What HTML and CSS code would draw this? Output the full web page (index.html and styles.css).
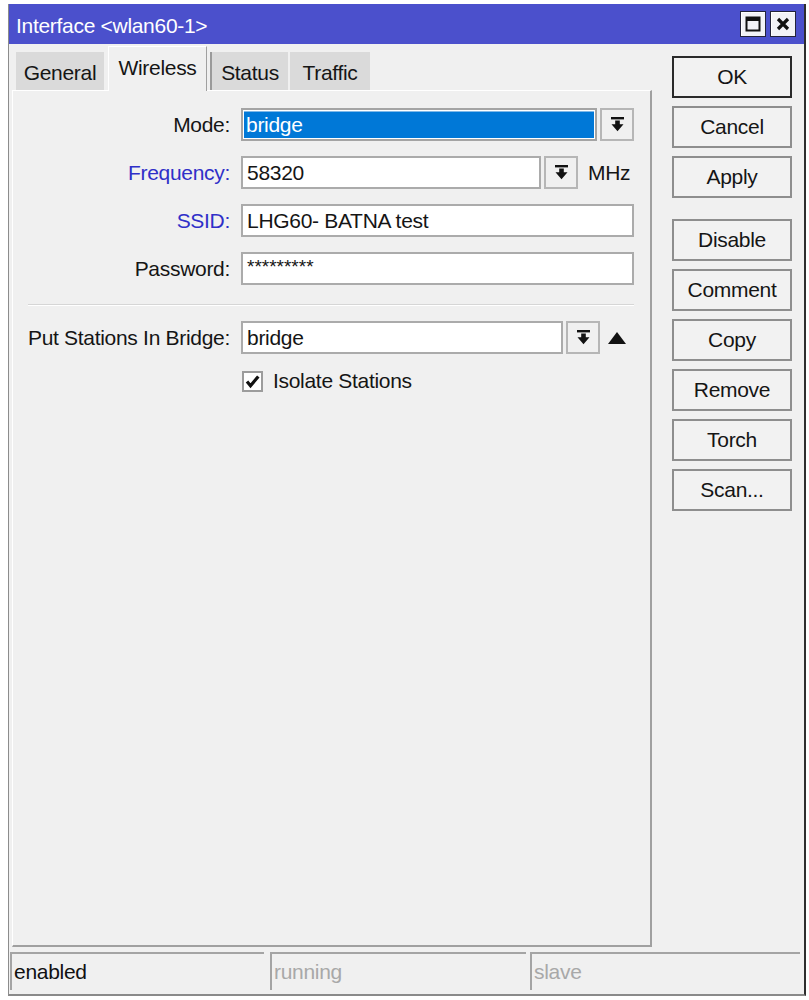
FILE: index.html
```html
<!DOCTYPE html>
<html lang="en">
<head>
    <meta charset="UTF-8">
    <title>Interface &lt;wlan60-1&gt;</title>
    <link rel="stylesheet" href="styles.css">
</head>
<body>
    <div class="window">
        <!-- 标题栏 -->
        <div class="titlebar">
            <span class="title">Interface &lt;wlan60-1&gt;</span>
            <div class="title-buttons">
                <span class="tbtn">
                    <svg width="16" height="16" viewBox="0 0 16 16"><rect x="1.5" y="1.5" width="13" height="13" fill="none" stroke="#111" stroke-width="2"/><rect x="1" y="1" width="14" height="4" fill="#111"/></svg>
                </span>
                <span class="tbtn">
                    <svg width="16" height="16" viewBox="0 0 16 16"><path d="M3 3L13 13M13 3L3 13" stroke="#111" stroke-width="3.2"/></svg>
                </span>
            </div>
        </div>

        <div class="window-body">
            <div class="main">
                <div class="left">
                    <div class="tabs">
                        <div class="tab tab-general">General</div>
                        <div class="tab active">Wireless</div>
                        <div class="tab tab-status">Status</div>
                        <div class="tab tab-traffic">Traffic</div>
                    </div>
                    <div class="panel">
                        <div class="form">
                            <div class="label">Mode:</div>
                            <div class="ctl">
                                <div class="field selected"><span class="sel">bridge</span></div>
                                <span class="drop"><svg width="13" height="15" viewBox="0 0 13 15"><rect x="0" y="0" width="13" height="2.4" fill="#111"/><path d="M4.2 3.6h4.6v3.6h3.7l-6 7-6-7h3.7z" fill="#111"/></svg></span>
                            </div>

                            <div class="label blue">Frequency:</div>
                            <div class="ctl">
                                <div class="field">58320</div>
                                <span class="drop"><svg width="13" height="15" viewBox="0 0 13 15"><rect x="0" y="0" width="13" height="2.4" fill="#111"/><path d="M4.2 3.6h4.6v3.6h3.7l-6 7-6-7h3.7z" fill="#111"/></svg></span>
                                <span class="unit">MHz</span>
                            </div>

                            <div class="label blue">SSID:</div>
                            <div class="ctl">
                                <div class="field">LHG60- BATNA test</div>
                            </div>

                            <div class="label">Password:</div>
                            <div class="ctl">
                                <div class="field password">*********</div>
                            </div>

                            <div class="sep"></div>

                            <div class="label">Put Stations In Bridge:</div>
                            <div class="ctl">
                                <div class="field">bridge</div>
                                <span class="drop"><svg width="13" height="15" viewBox="0 0 13 15"><rect x="0" y="0" width="13" height="2.4" fill="#111"/><path d="M4.2 3.6h4.6v3.6h3.7l-6 7-6-7h3.7z" fill="#111"/></svg></span>
                                <span class="updown"><svg width="18" height="12" viewBox="0 0 18 12"><path d="M9 0L18 12H0z" fill="#111"/></svg></span>
                            </div>

                            <div class="check-row">
                                <span class="checkbox"><svg width="15" height="15" viewBox="0 0 15 15"><path d="M2 7.5l3.5 4.2 7.8-9.2" fill="none" stroke="#111" stroke-width="3.2"/></svg></span>
                                <span>Isolate Stations</span>
                            </div>
                        </div>
                    </div>
                </div>

                <!-- 右侧按钮 -->
                <div class="actions">
                    <div class="btn btn-ok">OK</div>
                    <div class="btn">Cancel</div>
                    <div class="btn">Apply</div>
                    <div class="btn btn-gap">Disable</div>
                    <div class="btn">Comment</div>
                    <div class="btn">Copy</div>
                    <div class="btn">Remove</div>
                    <div class="btn">Torch</div>
                    <div class="btn">Scan...</div>
                </div>
            </div>

            <!-- 状态栏 -->
            <div class="statusbar">
                <div class="cell cell-1">enabled</div>
                <div class="cell cell-2 dim">running</div>
                <div class="cell cell-3 dim">slave</div>
            </div>
        </div>
    </div>
</body>
</html>
```

FILE: styles.css
```css
/* 重置样式 */
html, body {
    margin: 0;
    padding: 0;
    background: #fff;
}

body {
    font-family: "Liberation Sans", Arial, sans-serif;
    font-size: 21px;
    letter-spacing: -0.3px;
    color: #151515;
}

/* 窗口 */
.window {
    margin: 4px 0 0 8px;
    width: 798px;
    box-sizing: border-box;
    border-left: 1px solid #8c8c8c;
    border-right: 2px solid #2e2e2e;
    border-bottom: 2px solid #8a8a8a;
    background: #f0f0f0;
}

.titlebar {
    height: 40px;
    box-sizing: border-box;
    background: #4b50cc;
    display: flex;
    align-items: center;
    justify-content: space-between;
    padding: 0 8px 0 7px;
    color: #fff;
}

.title {
    padding-top: 3px;
}

.title-buttons {
    display: flex;
    gap: 4px;
}

.tbtn {
    width: 26px;
    height: 26px;
    box-sizing: border-box;
    border: 1px solid #23233a;
    background: #f2f2f6;
    box-shadow: inset 1px 1px 0 #fff;
    display: flex;
    align-items: center;
    justify-content: center;
}

.window-body {
    padding: 2px 0 4px 3px;
}

.main {
    display: flex;
}

.left {
    width: 640px;
}

/* 标签页 */
.tabs {
    display: flex;
    align-items: flex-end;
    height: 44px;
}

.tab {
    height: 38px;
    padding-top: 3px;
    background: #dadada;
    display: flex;
    align-items: center;
    justify-content: center;
    box-sizing: border-box;
}

.tab-general {
    margin-left: 4px;
    width: 88px;
}

.tab.active {
    width: 99px;
    height: 45px;
    margin-left: 4px;
    margin-bottom: -1px;
    padding: 0 0 3px;
    background: #f0f0f0;
    border-top: 1px solid #fff;
    border-left: 1px solid #fff;
    border-right: 1px solid #a0a0a0;
    position: relative;
    z-index: 1;
}

.tab-status {
    margin-left: 3px;
    width: 78px;
    border-left: 2px solid #9a9a9a;
}

.tab-traffic {
    margin-left: 2px;
    width: 80px;
}

.panel {
    height: 857px;
    box-sizing: border-box;
    border-top: 1px solid #fff;
    border-left: 1px solid #fff;
    border-right: 2px solid #a0a0a0;
    border-bottom: 2px solid #a0a0a0;
    padding-top: 17px;
}

/* 表单 */
.form {
    display: grid;
    grid-template-columns: 217px 393px;
    column-gap: 11px;
    row-gap: 15px;
    align-items: center;
}

.label {
    text-align: right;
    white-space: nowrap;
}

.label.blue {
    color: #2f2fc8;
}

.ctl {
    display: flex;
    align-items: center;
}

.field {
    flex: 1;
    height: 33px;
    box-sizing: border-box;
    border: 2px solid #ababab;
    background: #fff;
    display: flex;
    align-items: center;
    padding-left: 4px;
    white-space: nowrap;
}

.field.selected {
    padding: 1px;
    border-color: #a4a4a4;
}

.sel {
    flex: 1;
    height: 100%;
    background: #0078d7;
    color: #fff;
    display: flex;
    align-items: center;
    padding-left: 2px;
    box-shadow: inset 0 1px 0 #7fb8e8;
}

.password {
    font-size: 19px;
    letter-spacing: 0;
    padding-bottom: 3px;
}

.drop {
    width: 34px;
    height: 33px;
    margin-left: 3px;
    box-sizing: border-box;
    border: 2px solid #b6b6b6;
    background: #f0f0f0;
    display: flex;
    align-items: center;
    justify-content: center;
}

.unit {
    width: 46px;
    margin-left: 10px;
}

.updown {
    width: 34px;
    display: flex;
    justify-content: center;
}

.sep {
    grid-column: 1 / -1;
    margin: 4px 0 0 15px;
    height: 2px;
    box-sizing: border-box;
    border-top: 1px solid #d6d6d6;
    border-bottom: 1px solid #fff;
}

.check-row {
    grid-column: 2;
    display: flex;
    align-items: center;
    gap: 10px;
}

.checkbox {
    width: 21px;
    height: 21px;
    margin-left: 1px;
    box-sizing: border-box;
    border: 2px solid #9c9c9c;
    background: #fff;
    display: flex;
    align-items: center;
    justify-content: center;
}

/* 右侧按钮 */
.actions {
    margin-left: 20px;
    width: 120px;
    padding-top: 10px;
    display: flex;
    flex-direction: column;
    gap: 8px;
}

.btn {
    height: 42px;
    box-sizing: border-box;
    border: 2px solid #8e8e8e;
    background: #f2f2f2;
    display: flex;
    align-items: center;
    justify-content: center;
}

.btn-ok {
    border-color: #2a2a2a;
}

.btn-gap {
    margin-top: 13px;
}

/* 状态栏 */
.statusbar {
    display: flex;
    height: 38px;
    margin: 5px 0 0 -2px;
}

.cell {
    box-sizing: border-box;
    border-top: 2px solid #a4a4a4;
    border-left: 2px solid #a4a4a4;
    display: flex;
    align-items: center;
    padding-left: 2px;
}

.cell-1 {
    width: 254px;
    color: #111;
}

.cell-2 {
    width: 256px;
    margin-left: 6px;
}

.cell-3 {
    width: 270px;
    margin-left: 4px;
}

.dim {
    color: #a8a8a8;
}
```
